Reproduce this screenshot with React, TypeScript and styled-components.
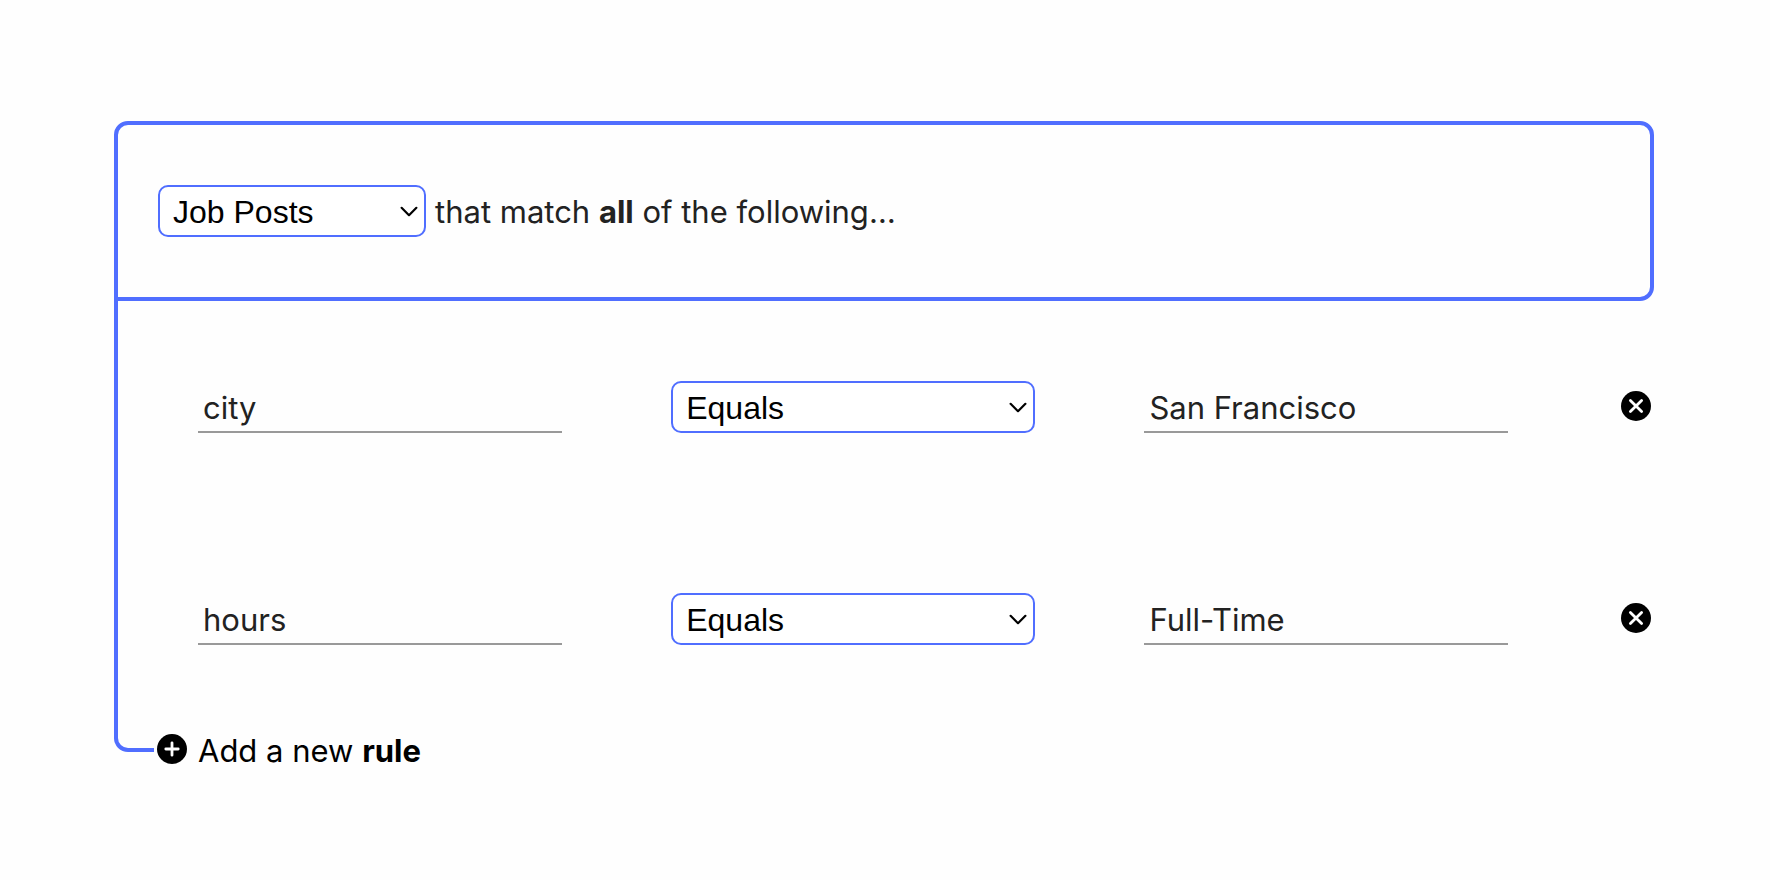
import React, { useState } from "react";
import styled, { createGlobalStyle } from "styled-components";

const BLUE = "#506eff";

const GlobalStyle = createGlobalStyle`
  *, *::before, *::after { box-sizing: border-box; }
  body {
    margin: 0;
    background: #fefefe;
    color: #222;
    font-family: Inter, "Liberation Sans", sans-serif;
    font-size: 31px;
    line-height: 40px;
  }
`;

const Page = styled.main`
  padding: 121px 116px 40px 114px;
`;

const GroupHeader = styled.header`
  display: flex;
  align-items: center;
  gap: 9px;
  padding: 60px 40px;
  border: 4px solid ${BLUE};
  border-radius: 14px 14px 14px 0;
`;

const Sentence = styled.p`
  margin: 0;
  padding-top: 1px;
`;

const Rules = styled.ul`
  display: flex;
  flex-direction: column;
  gap: 160px;
  margin: 0;
  padding: 80px 0 89px 80px;
  border-left: 4px solid ${BLUE};
  list-style: none;
`;

const Rule = styled.li`
  display: grid;
  grid-template-columns: repeat(3, 25%) 1fr;
  column-gap: 7.5%;
  align-items: center;
`;

const TextField = styled.input`
  width: 100%;
  height: 52px;
  padding: 2px 5px 0;
  border: 0;
  border-bottom: 2px solid #999;
  border-radius: 0;
  outline: 0;
  background: transparent;
  color: inherit;
  font: inherit;
`;

const SelectFrame = styled.span<{ $width?: string }>`
  position: relative;
  display: block;
  width: ${({ $width }) => $width ?? "100%"};
`;

const Select = styled.select`
  display: block;
  appearance: none;
  width: 100%;
  height: 52px;
  padding: 1px 36px 0 13px;
  border: 2px solid ${BLUE};
  border-radius: 10px;
  background: #fff;
  color: #000;
  font: 32px/40px "Liberation Sans", sans-serif;
`;

const Chevron = styled.svg`
  position: absolute;
  top: 21px;
  right: 8px;
  width: 18px;
  height: 11px;
  pointer-events: none;
`;

const IconButton = styled.button`
  display: flex;
  justify-content: center;
  padding: 0 0 2px;
  border: 0;
  background: none;
  cursor: pointer;
`;

const Disc = styled.svg`
  display: block;
  flex: none;
  width: 30px;
  height: 30px;
`;

const Footer = styled.footer`
  display: flex;
  align-items: flex-start;
  gap: 3px;
`;

const Connector = styled.span`
  width: 40px;
  height: 18px;
  border: solid ${BLUE};
  border-width: 0 0 4px 4px;
  border-bottom-left-radius: 14px;
`;

const AddButton = styled.button`
  display: flex;
  align-items: flex-start;
  gap: 11px;
  padding: 0;
  border: 0;
  background: none;
  color: #000;
  font: inherit;
  line-height: 34px;
  cursor: pointer;
`;

type DropdownProps = {
  label: string;
  options: string[];
  width?: string;
};

function Dropdown({ label, options, width }: DropdownProps) {
  return (
    <SelectFrame $width={width}>
      <Select aria-label={label}>
        {options.map((option) => (
          <option key={option}>{option}</option>
        ))}
      </Select>
      <Chevron viewBox="0 0 18 11" fill="none" aria-hidden="true">
        <path
          d="M1.6 1.8 9 9.2l7.4-7.4"
          stroke="#000"
          strokeWidth="2.2"
          strokeLinecap="round"
          strokeLinejoin="round"
        />
      </Chevron>
    </SelectFrame>
  );
}

function DiscIcon({ mark }: { mark: string }) {
  return (
    <Disc viewBox="0 0 30 30" aria-hidden="true">
      <circle cx="15" cy="15" r="15" fill="#000" />
      <path d={mark} stroke="#fff" strokeWidth="2.8" strokeLinecap="round" />
    </Disc>
  );
}

const PLUS = "M15 8.8v12.4M8.8 15h12.4";
const CROSS = "M9.4 9.4l11.2 11.2M20.6 9.4L9.4 20.6";

const initialRules = [
  { id: 1, field: "city", value: "San Francisco" },
  { id: 2, field: "hours", value: "Full-Time" },
];

export default function App() {
  const [rules, setRules] = useState(initialRules);

  const addRule = () =>
    setRules((list) => [...list, { id: Date.now(), field: "", value: "" }]);
  const removeRule = (id: number) =>
    setRules((list) => list.filter((rule) => rule.id !== id));

  return (
    <>
      <GlobalStyle />
      <Page>
        <GroupHeader>
          <Dropdown
            label="Record type"
            options={["Job Posts", "Companies"]}
            width="268px"
          />
          <Sentence>
            that match <b>all</b> of the following…
          </Sentence>
        </GroupHeader>
        <Rules>
          {rules.map((rule) => (
            <Rule key={rule.id}>
              <TextField aria-label="Field" defaultValue={rule.field} />
              <Dropdown label="Operator" options={["Equals", "Contains"]} />
              <TextField aria-label="Value" defaultValue={rule.value} />
              <IconButton
                type="button"
                aria-label="Remove rule"
                onClick={() => removeRule(rule.id)}
              >
                <DiscIcon mark={CROSS} />
              </IconButton>
            </Rule>
          ))}
        </Rules>
        <Footer>
          <Connector />
          <AddButton type="button" onClick={addRule}>
            <DiscIcon mark={PLUS} />
            <span>
              Add a new <b>rule</b>
            </span>
          </AddButton>
        </Footer>
      </Page>
    </>
  );
}
